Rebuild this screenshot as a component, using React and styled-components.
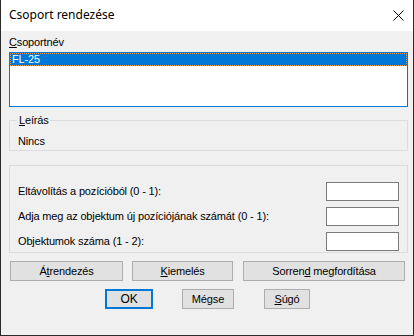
import React from "react";
import styled, { createGlobalStyle } from "styled-components";

const Global = createGlobalStyle`
  html, body { margin: 0; padding: 0; background: #ffffff; }
  * { box-sizing: border-box; }
`;

const Window = styled.div`
  width: 414px;
  height: 336px;
  display: flex;
  flex-direction: column;
  border: 1px solid #2b2b2b;
  border-top: none;
  font-family: "Liberation Sans", Arial, sans-serif;
  font-size: 11px;
  line-height: 13px;
  letter-spacing: -0.15px;
  color: #000;
`;

const TitleBar = styled.div`
  height: 31px;
  flex: none;
  background: #fff;
  display: flex;
  align-items: center;
  justify-content: space-between;
  padding: 0 9px 0 8px;
`;

const Title = styled.div`
  font-family: "Noto Sans", "Open Sans", sans-serif;
  font-size: 12px;
  line-height: 16px;
  letter-spacing: 0;
  margin-top: -1px;
`;

const Body = styled.div`
  flex: 1;
  background: #f0f0f0;
  padding: 5px 5px 0 8px;
  display: flex;
  flex-direction: column;
`;

const Label = styled.div`
  height: 13px;
`;

const ListBox = styled.div`
  margin-top: 3px;
  height: 55px;
  background: #fff;
  border: 1px solid #0078d7;
`;

const ListItem = styled.div`
  height: 13px;
  background: #0078d7;
  color: #fff;
  padding-left: 2px;
  outline: 1px dotted #f39a3c;
  outline-offset: -1px;
`;

const Group = styled.fieldset`
  margin: ${(p) => p.$mt}px 0 0 0;
  padding: ${(p) => p.$pt}px 8px ${(p) => p.$pb}px 8px;
  border: 1px solid #dcdcdc;
  min-width: 0;
`;

const Legend = styled.legend`
  padding: 0 1px 0 2px;
  margin-left: -1px;
  height: 13px;
`;

const Row = styled.div`
  height: 19px;
  display: flex;
  align-items: center;
  justify-content: space-between;
  margin-top: ${(p) => (p.$first ? 0 : 6)}px;
`;

const Input = styled.div`
  width: 73px;
  height: 19px;
  background: #fff;
  border: 1px solid #7a7a7a;
`;

const ButtonRow = styled.div`
  display: flex;
  margin-top: 8px;
  padding-left: ${(p) => p.$pl}px;
`;

const Button = styled.div`
  width: ${(p) => p.$w}px;
  height: 20px;
  margin-right: ${(p) => p.$mr || 0}px;
  background: #e1e1e1;
  border: ${(p) => (p.$def ? "2px solid #0078d7" : "1px solid #adadad")};
  display: flex;
  align-items: center;
  justify-content: center;
  font-size: ${(p) => (p.$big ? 12 : 11)}px;
`;

const Close = styled.svg`
  display: block;
`;

export default function App() {
  return (
    <>
      <Global />
      <Window>
        <TitleBar>
          <Title>Csoport rendezése</Title>
          <Close width="11" height="11" viewBox="0 0 11 11">
            <path d="M0.5 0.5 L10.5 10.5 M10.5 0.5 L0.5 10.5" stroke="#000" strokeWidth="1" fill="none" />
          </Close>
        </TitleBar>
        <Body>
          <Label>
            <u>C</u>soportnév
          </Label>
          <ListBox>
            <ListItem>FL-25</ListItem>
          </ListBox>
          <Group $mt={7} $pt={8} $pb={2}>
            <Legend>
              <u>L</u>eírás
            </Legend>
            <div>Nincs</div>
          </Group>
          <Group $mt={14} $pt={16} $pb={1}>
            <Row $first>
              <span>Eltávolítás a pozícióból (0 - 1):</span>
              <Input />
            </Row>
            <Row>
              <span>Adja meg az objektum új pozíciójának számát (0 - 1):</span>
              <Input />
            </Row>
            <Row>
              <span>Objektumok száma (1 - 2):</span>
              <Input />
            </Row>
          </Group>
          <ButtonRow $pl={1}>
            <Button $w={113} $mr={9}>
              <span>
                Á<u>t</u>rendezés
              </span>
            </Button>
            <Button $w={101} $mr={10}>
              <span>
                <u>K</u>iemelés
              </span>
            </Button>
            <Button $w={162}>
              <span>
                Sorren<u>d</u> megfordítása
              </span>
            </Button>
          </ButtonRow>
          <ButtonRow $pl={96}>
            <Button $w={48} $mr={29} $def $big>
              OK
            </Button>
            <Button $w={52} $mr={30}>
              Mégse
            </Button>
            <Button $w={46}>
              <span>
                <u>S</u>úgó
              </span>
            </Button>
          </ButtonRow>
        </Body>
      </Window>
    </>
  );
}
